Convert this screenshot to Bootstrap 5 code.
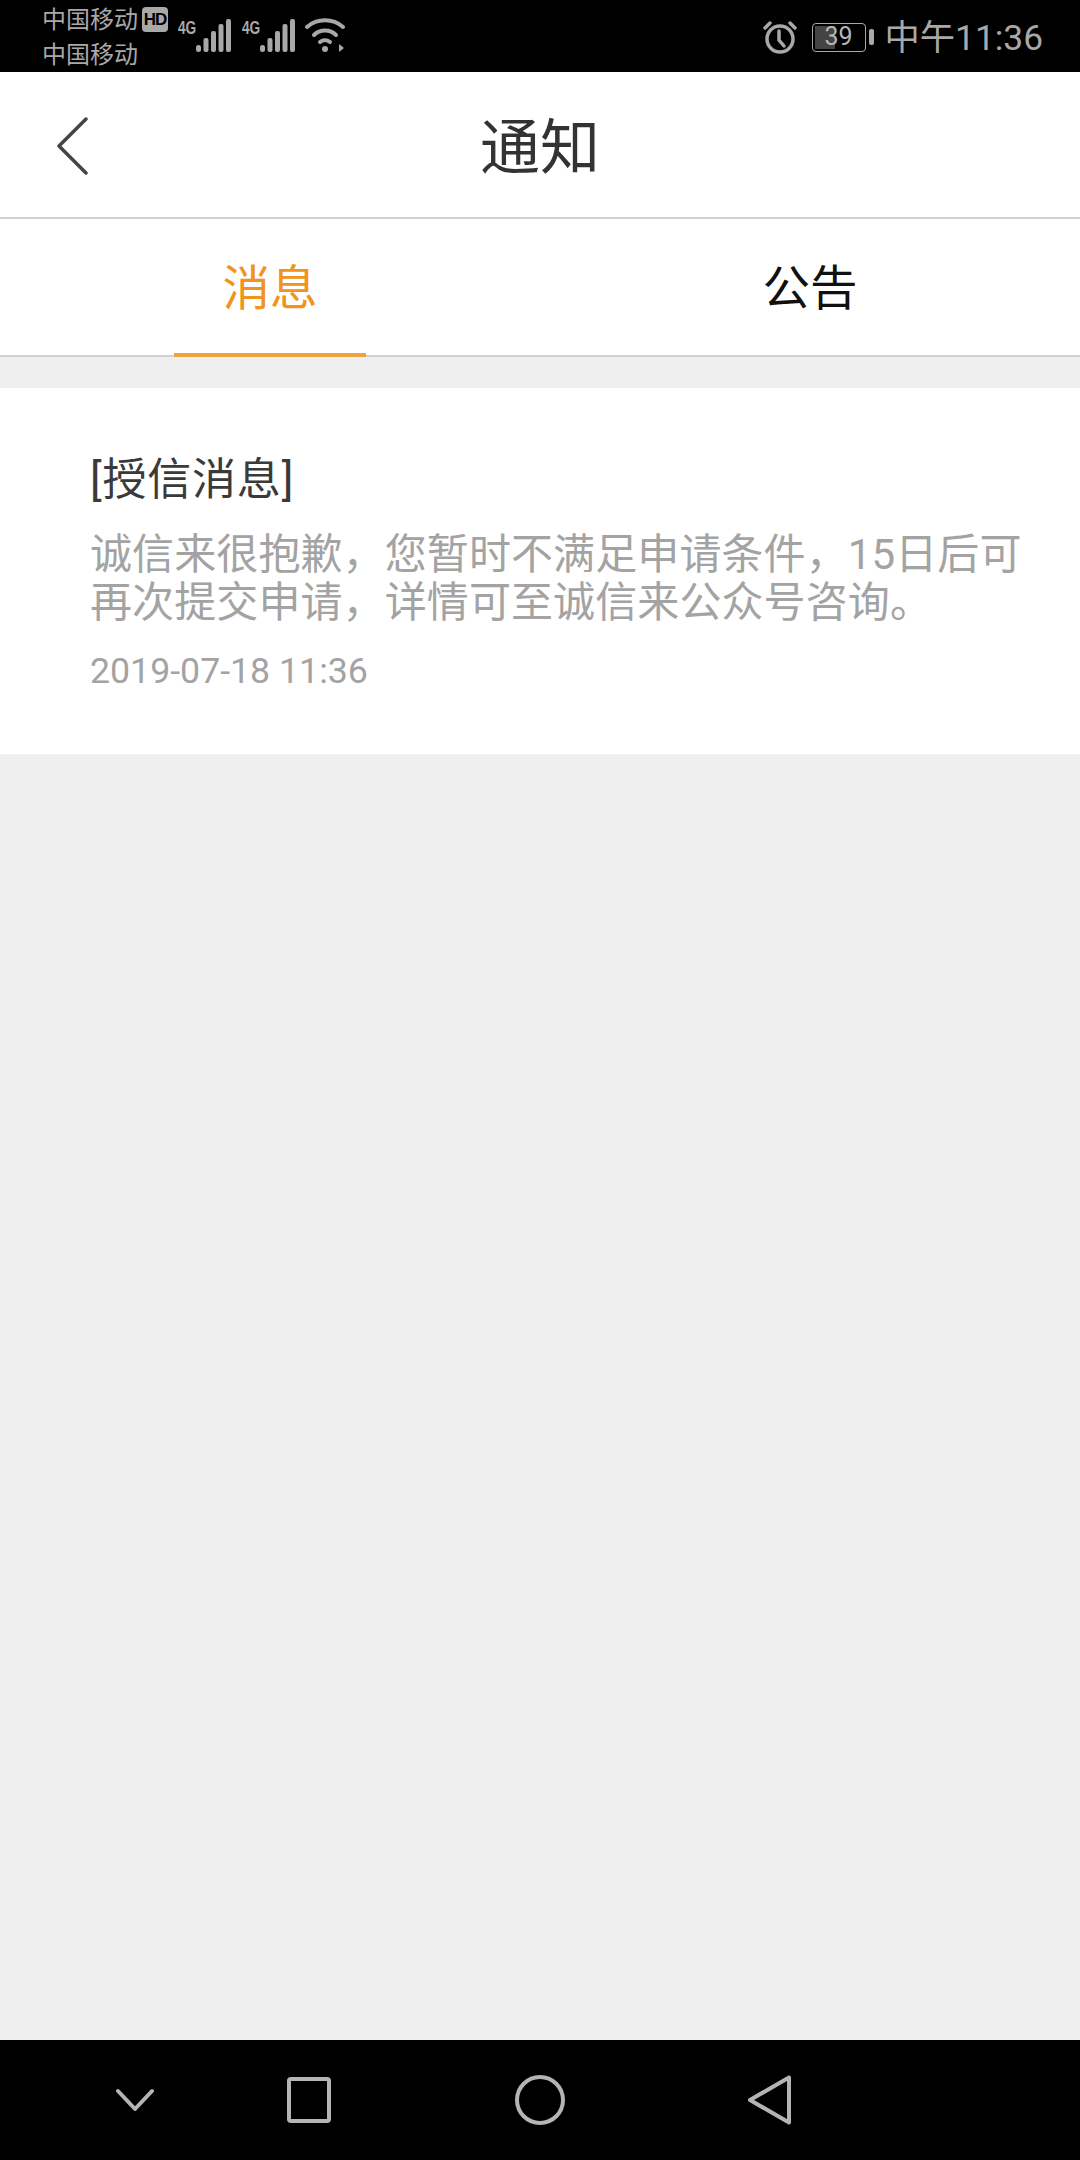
<!DOCTYPE html>
<html lang="zh-CN">
<head>
<meta charset="utf-8">
<title>通知</title>
<link href="https://cdn.jsdelivr.net/npm/bootstrap@5.3.0/dist/css/bootstrap.min.css" rel="stylesheet">
<style>
html,body{margin:0;height:100%;}
body{font-family:Roboto,"Noto Sans CJK SC",sans-serif;background:#efefef;}
.phone{width:1080px;height:2160px;}
.sb{height:72px;background:#000;color:#a8a8a8;flex:none;}
.sb-left{padding-left:42px;}
.carrier{width:100px;font-size:24px;line-height:35px;padding-top:3px;white-space:nowrap;}
.hd-tag{width:26px;height:25px;margin-top:7px;background:#a8a8a8;color:#000;border-radius:4px;font:700 17px/25px "Liberation Sans",sans-serif;text-align:center;letter-spacing:-1px;}
.sig-wrap{margin-top:18px;margin-left:10px;}
.sig-wrap+.sig-wrap{margin-left:10px;}
.gee{font:700 19px/18px "Liberation Sans",sans-serif;width:18px;margin-top:1px;transform:scaleX(.72);transform-origin:left;}
.wifi-ic{margin-left:9px;margin-top:17px;}
.sb-right{padding-right:37px;height:72px;}
.alarm-ic{margin-right:15px;margin-top:2px;}
.batt{width:54px;height:29px;border:1.5px solid #a8a8a8;border-radius:4px;font-size:25px;line-height:26px;text-align:center;position:relative;color:#b5b5b5;overflow:hidden;margin-top:2px;}
.batt-fill{position:absolute;left:2px;top:2px;bottom:2px;width:39%;background:#444;}
.batt-num{position:relative;}
.batt-nub{width:5px;height:16px;background:#a8a8a8;border-radius:2px;margin-left:3px;margin-right:11px;margin-top:2px;}
.clock{font-size:35.300px;line-height:40px;white-space:nowrap;margin-top:3px;}
.topbar{height:147px;background:#fff;border-bottom:2px solid #cfcfcf;flex:none;position:relative;}
.back-ic{margin-left:56px;margin-top:2px;}
.page-title{position:absolute;left:0;right:0;top:42px;margin:0;text-align:center;font-size:60px;line-height:70px;font-weight:400;color:#333;}
.tabs-row{height:138px;background:#fff;border-bottom:2px solid #d2d2d2;flex:none;}
.tab-cell{width:540px;height:136px;position:relative;font-size:47.500px;line-height:140px;text-align:center;color:#111;}
.tab-on{color:#ef941d;}
.tab-on::after{content:"";position:absolute;left:174px;width:192px;height:4px;bottom:-2px;background:#eda33e;}
.gap-strip{height:31px;flex:none;}
.msg-box{height:366px;background:#fff;padding:0 40px 0 90px;flex:none;}
.msg-title{font-size:44px;line-height:52px;color:#3a3a3a;margin:0;padding-top:66px;font-weight:400;letter-spacing:.8px;}
.msg-body{font-size:42px;line-height:48px;color:#a3a3a3;margin:0;padding-top:25px;letter-spacing:.1px;white-space:nowrap;}
.msg-date{font-size:35.700px;line-height:44px;color:#a3a3a3;margin:0;padding-top:22px;}
.navbtm{height:120px;background:#000;flex:none;padding-left:116px;}
.ic2{margin-left:133px;}
.ic3{margin-left:184px;}
.ic4{margin-left:183px;}
</style>
</head>
<body>
<div class="phone d-flex flex-column">
  <div class="sb d-flex justify-content-between align-items-start">
    <div class="sb-left d-flex align-items-start">
      <div class="carrier"><div>中国移动</div><div>中国移动</div></div>
      <div class="hd-tag">HD</div>
      <div class="sig-wrap d-flex">
        <div class="gee">4G</div>
        <svg width="36" height="36" viewBox="0 0 36 36" fill="#a8a8a8"><rect x="0" y="27" width="5" height="7" rx="2.500"/><rect x="7.500" y="20" width="5" height="14" rx="2"/><rect x="15" y="13" width="5" height="21" rx="2"/><rect x="22.500" y="6" width="5" height="28" rx="2"/><rect x="30" y="1" width="5" height="33" rx="2"/></svg>
      </div>
      <div class="sig-wrap d-flex">
        <div class="gee">4G</div>
        <svg width="36" height="36" viewBox="0 0 36 36" fill="#a8a8a8"><rect x="0" y="27" width="5" height="7" rx="2.500"/><rect x="7.500" y="20" width="5" height="14" rx="2"/><rect x="15" y="13" width="5" height="21" rx="2"/><rect x="22.500" y="6" width="5" height="28" rx="2"/><rect x="30" y="1" width="5" height="33" rx="2"/></svg>
      </div>
      <svg class="wifi-ic" width="42" height="36" viewBox="0 0 42 36" fill="none" stroke="#a8a8a8" stroke-width="4" stroke-linecap="round"><path d="M2 10C12 1 28 1 38 10"/><path d="M9 18C15 12 25 12 31 18"/><path d="M15 25C18 22.500 22 22.500 25 25"/><circle cx="20" cy="32" r="3" fill="#a8a8a8" stroke="none"/><path d="M34 27v8l5-4z" fill="#a8a8a8" stroke="none"/></svg>
    </div>
    <div class="sb-right d-flex align-items-center">
      <svg class="alarm-ic" width="34" height="34" viewBox="0 0 34 34" fill="none" stroke="#a8a8a8" stroke-width="3.500" stroke-linecap="round"><circle cx="17" cy="19" r="13"/><path d="M16 11v9l5 6"/><path d="M2 8l5-5M32 8l-5-5"/></svg>
      <div class="batt"><span class="batt-fill"></span><span class="batt-num">39</span></div>
      <div class="batt-nub"></div>
      <div class="clock">中午11:36</div>
    </div>
  </div>

  <div class="topbar d-flex align-items-center">
    <svg class="back-ic" width="32" height="58" viewBox="0 0 32 58" fill="none" stroke="#444" stroke-width="3.500" stroke-linecap="round" stroke-linejoin="round"><path d="M30 2L3 29L30 56"/></svg>
    <h1 class="page-title">通知</h1>
  </div>

  <div class="tabs-row d-flex">
    <div class="tab-cell tab-on">消息</div>
    <div class="tab-cell">公告</div>
  </div>

  <div class="gap-strip"></div>

  <div class="msg-box">
    <h2 class="msg-title">[授信消息]</h2>
    <p class="msg-body">诚信来很抱歉，您暂时不满足申请条件，15日后可<br>再次提交申请，详情可至诚信来公众号咨询。</p>
    <p class="msg-date">2019-07-18 11:36</p>
  </div>

  <div class="flex-grow-1"></div>

  <div class="navbtm d-flex align-items-center">
    <svg width="38" height="24" viewBox="0 0 38 24" fill="none" stroke="#b4b4b4" stroke-width="4" stroke-linecap="round" stroke-linejoin="round"><path d="M2 3L19 21L36 3"/></svg>
    <svg class="ic2" width="44" height="46" viewBox="0 0 44 46" fill="none" stroke="#b4b4b4" stroke-width="4" stroke-linejoin="round"><rect x="2" y="2" width="40" height="42" rx="2"/></svg>
    <svg class="ic3" width="50" height="50" viewBox="0 0 50 50" fill="none" stroke="#b4b4b4" stroke-width="4"><circle cx="25" cy="25" r="23"/></svg>
    <svg class="ic4" width="44" height="50" viewBox="0 0 44 50" fill="none" stroke="#b4b4b4" stroke-width="4" stroke-linejoin="round"><path d="M41 2.500V47.500L2 25Z"/></svg>
  </div>
</div>
<script src="https://cdn.jsdelivr.net/npm/bootstrap@5.3.0/dist/js/bootstrap.bundle.min.js"></script>
</body>
</html>
